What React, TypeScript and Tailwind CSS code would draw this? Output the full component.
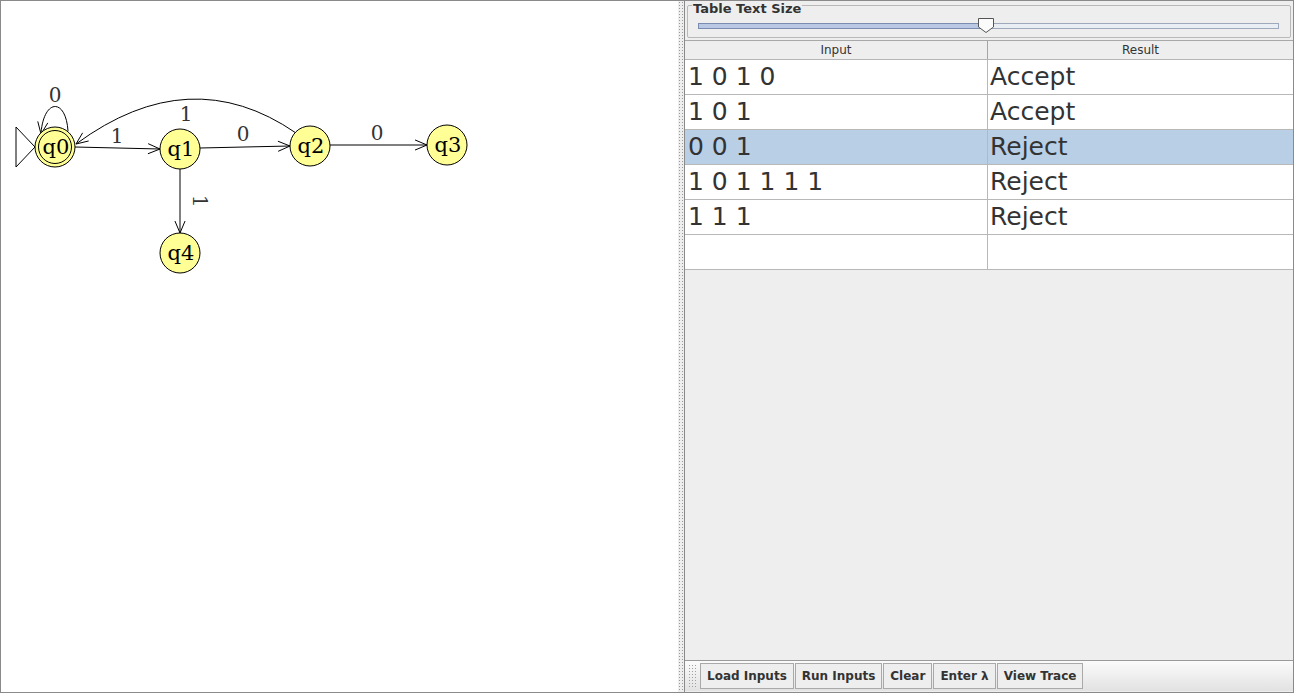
import React from "react";

interface Row {
    input: string,
    result: string
}

const rows: Row[] = [
    {input: "1 0 1 0", result: "Accept"},
    {input: "1 0 1", result: "Accept"},
    {input: "0 0 1", result: "Reject"},
    {input: "1 0 1 1 1 1", result: "Reject"},
    {input: "1 1 1", result: "Reject"},
    {input: "", result: ""},
];

const buttons = ["Load Inputs", "Run Inputs", "Clear", "Enter λ", "View Trace"];

// open "V" arrow head at tip, pointing along (dx, dy)
function arrowHead(x: number, y: number, dx: number, dy: number) {
    const len = Math.hypot(dx, dy);
    const ux = dx / len, uy = dy / len;
    const size = 13, spread = 0.4;
    const a1x = x - size * (ux * Math.cos(spread) - uy * Math.sin(spread));
    const a1y = y - size * (uy * Math.cos(spread) + ux * Math.sin(spread));
    const a2x = x - size * (ux * Math.cos(-spread) - uy * Math.sin(-spread));
    const a2y = y - size * (uy * Math.cos(-spread) + ux * Math.sin(-spread));
    return `M ${a1x} ${a1y} L ${x} ${y} L ${a2x} ${a2y}`;
}

function State({x, y, name, final}: {x: number, y: number, name: string, final?: boolean}) {
    return (
        <g>
            <circle cx={x} cy={y} r={20} fill="#ffff96" stroke="#000" strokeWidth={1}/>
            {final && <circle cx={x} cy={y} r={16.5} fill="none" stroke="#000" strokeWidth={1}/>}
            <text x={x + 1} y={y + 7} textAnchor="middle" fontSize={21} fill="#000"
                  style={{fontFamily: '"DejaVu Serif", serif'}}>{name}</text>
        </g>
    );
}

function Label({x, y, text, rotate}: {x: number, y: number, text: string, rotate?: boolean}) {
    return (
        <text x={x} y={y} textAnchor="middle" fontSize={20} fill="#333"
              transform={rotate ? `rotate(90 ${x} ${y - 7})` : undefined}
              style={{fontFamily: '"DejaVu Serif", serif'}}>{text}</text>
    );
}

function Automaton() {
    return (
        <svg width={677} height={690} className="block">
            <g transform="translate(-1 -1)" stroke="#000" fill="none" strokeWidth={1}>
                {/* start triangle */}
                <path d="M 16 127 L 35 147 L 16 167 Z"/>
                {/* q0 self loop */}
                <path d="M 68 131 C 66 98, 44 98, 41 133"/>
                <path d={arrowHead(41, 134, -0.15, 1)}/>
                {/* q0 -> q1 */}
                <path d="M 75 147 L 160 149"/>
                <path d={arrowHead(160, 149, 85, 2)}/>
                {/* q1 -> q2 */}
                <path d="M 200 148 L 290 146"/>
                <path d={arrowHead(290, 146, 90, -2)}/>
                {/* q2 -> q3 */}
                <path d="M 330 145 L 427 145"/>
                <path d={arrowHead(427, 145, 1, 0)}/>
                {/* q2 -> q0 */}
                <path d="M 296 133 Q 190 60, 76 144"/>
                <path d={arrowHead(76, 144, -114, 84)}/>
                {/* q1 -> q4 */}
                <path d="M 180 169 L 180 233"/>
                <path d={arrowHead(180, 233, 0, 1)}/>
            </g>
            <g transform="translate(-1 -1)">
                <Label x={55} y={102} text="0"/>
                <Label x={117} y={143} text="1"/>
                <Label x={243} y={141} text="0"/>
                <Label x={377} y={140} text="0"/>
                <Label x={186} y={121} text="1"/>
                <Label x={200} y={208} text="1" rotate/>
                <State x={55} y={147} name="q0" final/>
                <State x={180} y={149} name="q1"/>
                <State x={310} y={146} name="q2"/>
                <State x={447} y={145} name="q3"/>
                <State x={180} y={253} name="q4"/>
            </g>
        </svg>
    );
}

function App() {
    return (
        <div className="w-[1294px] h-[693px] flex border border-[#8a8a8a] bg-white overflow-hidden"
             style={{fontFamily: '"DejaVu Sans", sans-serif'}}>
            <div className="w-[677px] h-full bg-white">
                <Automaton/>
            </div>
            <div className="w-[6px] h-full bg-[#eeeeee] bg-[radial-gradient(#9a9a9a_0.6px,transparent_0.8px)] bg-[length:3px_3px]"/>
            <div className="flex-1 h-full flex flex-col border-l border-[#8a8a8a] bg-[#eeeeee]">
                {/* slider group */}
                <div className="px-[1px] pt-[4px] pb-[2px]">
                    <div className="relative h-[33px] border border-[#b8b8b8] rounded-[2px] mx-[1px]">
                        <span className="absolute left-[4px] -top-[5px] px-[1px] bg-[#eeeeee] text-[13px] leading-[16px] font-bold text-[#333]">Table Text Size</span>
                        <div className="flex items-start h-full pl-[10px] pr-[11px] pt-[17px]">
                            <div className="relative flex-1 h-[6px] flex">
                                <div className="w-[287px] h-full bg-[#b9c9e3] border border-[#7a8db0] border-r-0"/>
                                <div className="flex-1 h-full bg-[#e9eef5] border border-[#9eaabb] border-l-0"/>
                                <svg className="absolute left-[279px] -top-[6px]" width={18} height={17}>
                                    <path d="M 1.5 1.5 L 16.5 1.5 L 16.5 10 L 9 15.5 L 1.5 10 Z" fill="#fbfbfb" stroke="#555" strokeWidth={1}/>
                                </svg>
                            </div>
                        </div>
                    </div>
                </div>
                {/* table */}
                <div className="border-t border-[#a8a8a8]">
                    <div className="flex h-[19px] bg-[#eeeeee] border-b border-[#b5b5b5] text-[12px] text-[#333] leading-[18px]">
                        <div className="w-[303px] text-center border-r border-[#a5a5a5]">Input</div>
                        <div className="flex-1 text-center">Result</div>
                    </div>
                    {rows.map((row, i) => (
                        <div key={i}
                             className={`flex h-[35px] border-b border-[#b8b8b8] text-[25px] leading-[33px] text-[#333] ${i == 2 ? "bg-[#b8cfe5]" : "bg-white"}`}>
                            <div className="w-[303px] pl-[3px] border-r border-[#b8b8b8] whitespace-pre">{row.input}</div>
                            <div className="flex-1 pl-[2px]">{row.result}</div>
                        </div>
                    ))}
                </div>
                <div className="flex-1"/>
                {/* toolbar */}
                <div className="h-[31px] border-t border-[#9a9a9a] flex items-center bg-gradient-to-b from-[#fbfbfb] to-[#e2e2e2] mb-[1px]">
                    <div className="w-[10px] h-[24px] ml-[3px] mr-[2px] bg-[radial-gradient(#a0a0a0_0.6px,transparent_0.8px)] bg-[length:3px_3px]"/>
                    <div className="flex gap-[1px]">
                        {buttons.map((b) => (
                            <button key={b}
                                    className="h-[26px] px-[6px] border border-[#a9a9a9] bg-[#eeeeee] text-[12px] font-bold text-[#333] leading-[24px]">
                                {b}
                            </button>
                        ))}
                    </div>
                </div>
            </div>
        </div>
    )
}

export default App;
